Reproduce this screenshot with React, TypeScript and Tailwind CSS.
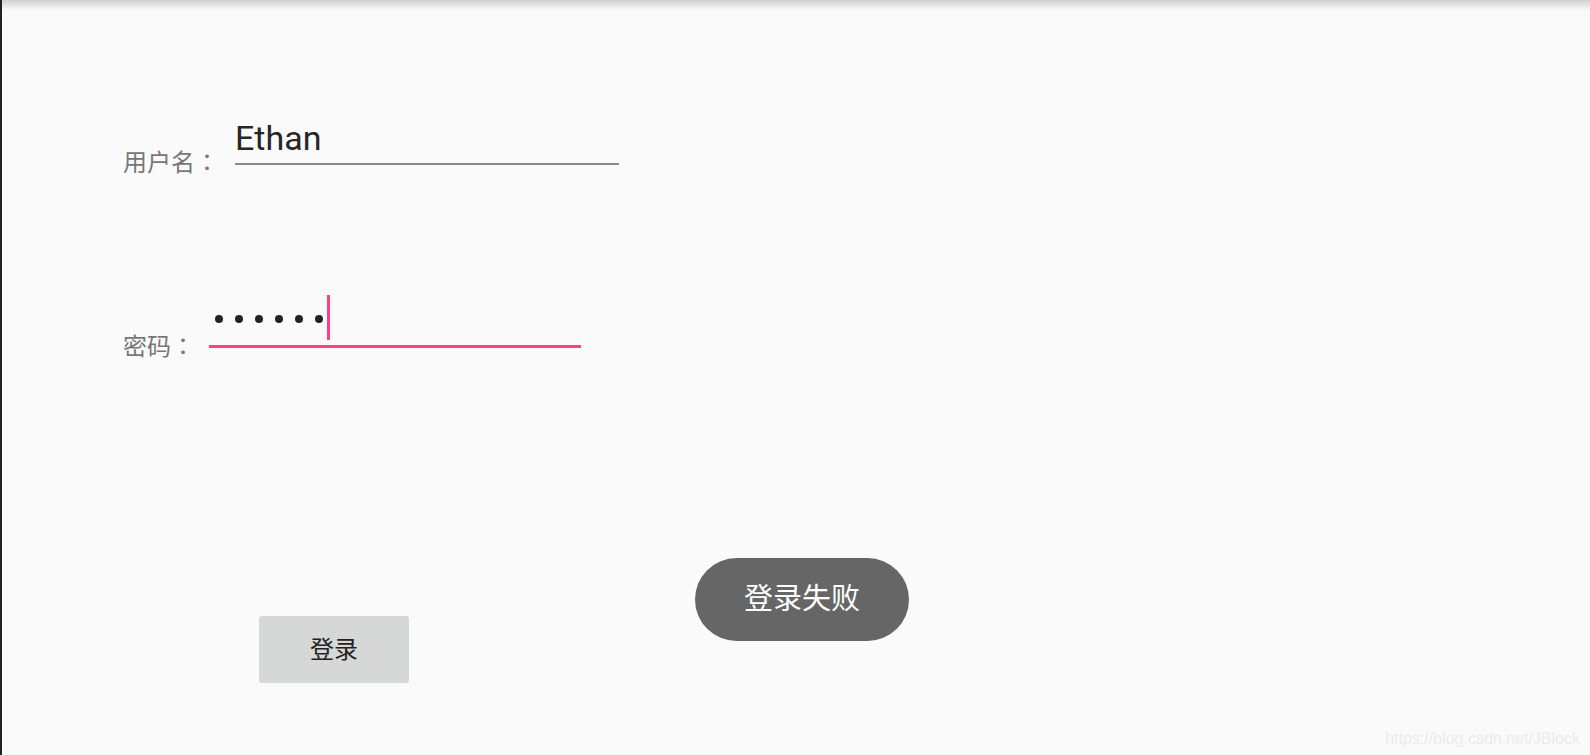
import React from "react";

const cjk = { fontFamily: 'Roboto, "Noto Sans CJK SC", sans-serif' };
const colon = { fontFamily: '"Noto Sans CJK TC", sans-serif' };

export default function App() {
  return (
    <div className="relative h-[755px] w-full overflow-hidden border-l-2 border-[#222] bg-[#fafafa]" style={cjk}>
      <div className="h-[10px] bg-gradient-to-b from-[#cfcfcf] to-[#fafafa]" />

      <div className="pl-[121px]">
        {/* username row */}
        <div className="mt-[111px] flex items-end">
          <span className="mb-[-10px] text-[24px] leading-none text-[#777]">
            用户名<span style={colon}>：</span>
          </span>
          <div className="ml-[16px] w-[384px] border-b-2 border-[#8a8a8a]">
            <div className="pb-[8px] text-[34px] leading-none text-[#262626]">Ethan</div>
          </div>
        </div>

        {/* password row */}
        <div className="mt-[132px] flex items-end">
          <span className="mb-[-11px] text-[24px] leading-none text-[#777]">
            密码<span style={colon}>：</span>
          </span>
          <div className="ml-[14px] w-[372px] border-b-[3px] border-[#ff4081]">
            <div className="flex h-[48px] items-center pl-[6px]">
              {[0, 1, 2, 3, 4, 5].map((i) => (
                <span key={i} className="mr-[12px] mt-[-4px] h-[8px] w-[8px] rounded-full bg-[#222]" />
              ))}
              <span className="ml-[-8px] mt-[-8px] h-[45px] w-[3px] bg-[#ff4081]" />
            </div>
          </div>
        </div>

        {/* login button */}
        <button className="ml-[136px] mt-[268px] flex h-[67px] w-[150px] items-center justify-center rounded-[3px] bg-[#d6d7d7] text-[24px] text-[#222]">
          登录
        </button>
      </div>

      {/* toast */}
      <div className="absolute left-[693px] top-[558px] flex h-[83px] w-[214px] items-center justify-center rounded-full bg-[#666] text-[29px] text-white">
        登录失败
      </div>

      <div className="absolute bottom-[4px] right-[10px] text-[16px] text-[#ebebeb]" style={{ fontFamily: '"Liberation Sans", Arial, sans-serif' }}>
        https://blog.csdn.net/JBlock
      </div>
    </div>
  );
}
